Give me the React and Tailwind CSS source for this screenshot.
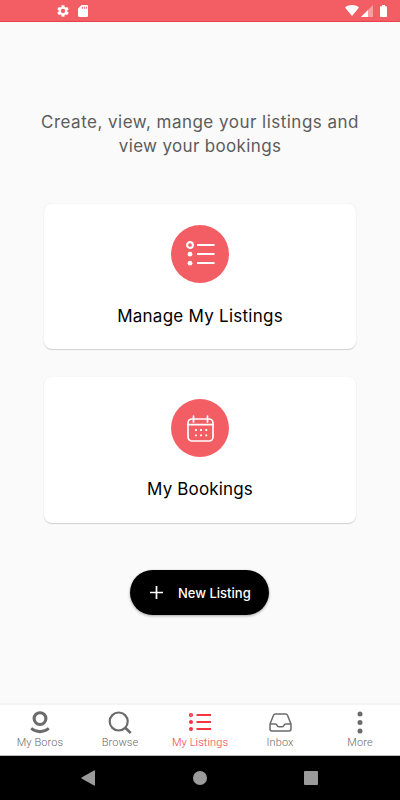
import React from "react";

function StatusBar() {
  return (
    <header className="flex h-[22px] shrink-0 items-center border-b border-[#e8414b] bg-[#f35d64] pr-[13px] pl-[57px] text-white">
      <svg className="size-3" viewBox="2 2 20 20" fill="currentColor">
        <path d="M19.14 12.94c.04-.3.06-.61.06-.94 0-.32-.02-.64-.07-.94l2.03-1.58c.18-.14.23-.41.12-.61l-1.92-3.32c-.12-.22-.37-.29-.59-.22l-2.39.96c-.5-.38-1.03-.7-1.62-.94l-.36-2.54c-.04-.24-.24-.41-.48-.41h-3.84c-.24 0-.43.17-.47.41l-.36 2.54c-.59.24-1.13.57-1.62.94l-2.39-.96c-.22-.08-.47 0-.59.22L2.74 8.87c-.12.21-.08.47.12.61l2.03 1.58c-.05.3-.09.63-.09.94s.02.64.07.94l-2.03 1.58c-.18.14-.23.41-.12.61l1.92 3.32c.12.22.37.29.59.22l2.39-.96c.5.38 1.03.7 1.62.94l.36 2.54c.05.24.24.41.48.41h3.84c.24 0 .44-.17.47-.41l.36-2.54c.59-.24 1.13-.56 1.62-.94l2.39.96c.22.08.47 0 .59-.22l1.92-3.32c.12-.22.07-.47-.12-.61l-2.01-1.58zM12 15.6A3.6 3.6 0 1 1 12 8.4a3.6 3.6 0 0 1 0 7.2z" />
      </svg>
      <svg className="mr-auto ml-[9px] h-3 w-[10px]" viewBox="0 0 10 12">
        <path d="M3.5 0H9q1 0 1 1v10q0 1-1 1H1q-1 0-1-1V3.5z" fill="#fff" />
        <path d="M4.300 1.800v2M6.300 1.800v2M8.300 1.800v2" stroke="#f35d64" strokeWidth="1" />
      </svg>
      <svg className="h-[11px] w-[14px]" viewBox="0 0 14 11">
        <path d="M0 2.400C4-.7 10-.7 14 2.400L7 11z" fill="#fff" />
      </svg>
      <svg className="ml-[2px] h-[12px] w-[12px]" viewBox="0 0 12 12">
        <path d="M12 0v12H0z" fill="#fff" opacity=".4" />
        <path d="M7 5v7H0z" fill="#fff" />
      </svg>
      <svg className="ml-[7px] h-3 w-[7px]" viewBox="0 0 7 12">
        <path d="M2 0h3v1.200h1.200q.8 0 .8.800v9.200q0 .8-.8.800H.8q-.8 0-.8-.8V2q0-.8.8-.8H2z" fill="#fff" />
      </svg>
    </header>
  );
}

function ListGlyph() {
  return (
    <svg className="h-[26px] w-[30px]" viewBox="0 0 30 26" fill="none" stroke="#fff">
      <circle cx="5" cy="4" r="2.900" strokeWidth="2.100" />
      <circle cx="5" cy="13.200" r="2.400" fill="#fff" stroke="none" />
      <circle cx="5" cy="22.200" r="2.400" fill="#fff" stroke="none" />
      <path d="M12 4h17.500M12 13h17.500M12 22h17.500" strokeWidth="1.900" />
    </svg>
  );
}

function CalendarGlyph() {
  return (
    <svg className="h-[27px] w-[27px]" viewBox="0 0 27 27" fill="none" stroke="#fff" strokeWidth="1.700">
      <rect x="1" y="4" width="25" height="22" rx="4" />
      <path d="M1 9.700h25M6.500 1v6M20.500 1v6" strokeLinecap="round" />
      <path d="M8 15h1.800M13.100 15h1.800M18.400 15h1.800M8 20.300h1.800M13.100 20.300h1.800M18.400 20.300h1.800" strokeWidth="1.800" />
    </svg>
  );
}

function ActionCard({ title, className, titleClass, children }) {
  return (
    <button className={`flex w-[312px] flex-col items-center rounded-[8px] bg-white shadow-[0_1px_1px_rgba(0,0,0,0.16),0_0_2px_rgba(0,0,0,0.05)] ${className}`}>
      <span className="flex size-[58px] items-center justify-center rounded-full bg-[#f35d64]">
        {children}
      </span>
      <span className={`text-[17px] leading-6 whitespace-nowrap text-black ${titleClass}`}>{title}</span>
    </button>
  );
}

function Tab({ label, active, children }) {
  return (
    <button className={`flex w-20 flex-col items-center pt-[3px] font-[Roboto,sans-serif] ${active ? "text-[#f4353f]" : "text-[#6b6b6b]"}`}>
      <span className="flex h-7 items-center justify-center">{children}</span>
      <span className="text-[11px] leading-[14px] font-light tracking-[0.100px] whitespace-nowrap">{label}</span>
    </button>
  );
}

export default function App() {
  return (
    <div className="flex h-[800px] w-[400px] flex-col overflow-hidden bg-[#fafafa] font-[Inter,sans-serif]">
      <StatusBar />
      <main className="flex flex-1 flex-col items-center pt-[89px]">
        <p className="text-center text-[17px] leading-[23.500px] whitespace-nowrap text-[#5c5c5c]">
          <span className="block tracking-[0.480px]">Create, view, mange your listings and</span>
          <span className="block tracking-[0.340px]">view your bookings</span>
        </p>
        <div className="mt-[46px] flex flex-col gap-7">
          <ActionCard title="Manage My Listings" className="h-[145px] pt-[21px]" titleClass="mt-[21px] tracking-[0.250px]">
            <ListGlyph />
          </ActionCard>
          <ActionCard title="My Bookings" className="h-[146px] pt-[22px]" titleClass="mt-5 tracking-[0.150px]">
            <CalendarGlyph />
          </ActionCard>
        </div>
        <button className="mt-[47px] mr-px flex h-[45px] w-[139px] items-center rounded-full bg-black pl-[20px] text-white shadow-[0_1px_3px_rgba(0,0,0,0.35)]">
          <svg className="size-[13px]" viewBox="0 0 13 13" stroke="currentColor" strokeWidth="1.700">
            <path d="M6.500 0v13M0 6.500h13" />
          </svg>
          <span className="ml-[15px] text-[13px] leading-5 font-medium whitespace-nowrap">New Listing</span>
        </button>
      </main>
      <nav className="flex h-[53px] shrink-0 border-t-2 border-b border-t-[#f3f3f3] border-b-[#bdbdbd] bg-white">
        <Tab label="My Boros">
          <svg className="h-[23px] w-5" viewBox="0 0 20 23" fill="none" stroke="currentColor">
            <circle cx="10" cy="7.600" r="5.900" strokeWidth="3.100" />
            <path d="M1.200 17.300c4.800 4.500 12.800 4.500 17.600 0" strokeWidth="2.900" />
          </svg>
        </Tab>
        <Tab label="Browse">
          <svg className="h-[23px] w-6" viewBox="0 0 24 23" fill="none" stroke="currentColor" strokeWidth="2.200">
            <circle cx="10.700" cy="10.500" r="9" />
            <path d="m17 16.500 5.700 5.500" strokeWidth="2.600" />
          </svg>
        </Tab>
        <Tab label="My Listings" active>
          <svg className="h-[20px] w-[22px]" viewBox="0 0 22 20" fill="none" stroke="currentColor">
            <circle cx="2" cy="3" r="1.300" strokeWidth="1.600" />
            <circle cx="2" cy="10" r="2" fill="currentColor" stroke="none" />
            <circle cx="2" cy="17" r="2" fill="currentColor" stroke="none" />
            <path d="M7.500 3H22M7.500 10H22M7.500 17H22" strokeWidth="2" />
          </svg>
        </Tab>
        <Tab label="Inbox">
          <svg className="h-[19px] w-[23px]" viewBox="0 0 23 19" fill="none" stroke="currentColor" strokeWidth="1.500" strokeLinejoin="round">
            <path d="M1 11 4.500 2.200Q5 1 6.300 1h10.400q1.300 0 1.800 1.200L22 11v5q0 2-2 2H3q-2 0-2-2z" />
            <path d="M1 11h5.500q1 0 1.300 1 .5 1.800 2.200 1.800h3q1.700 0 2.200-1.800.3-1 1.300-1H22" />
          </svg>
        </Tab>
        <Tab label="More">
          <svg className="h-[23px] w-[6px]" viewBox="0 0 6 23" fill="currentColor">
            <circle cx="3" cy="3" r="2.500" />
            <circle cx="3" cy="11.500" r="2.500" />
            <circle cx="3" cy="20" r="2.500" />
          </svg>
        </Tab>
      </nav>
      <div className="flex h-11 shrink-0 items-center bg-black pr-[82px] pl-[81px]">
        <svg className="h-4 w-[14px]" viewBox="0 0 14 16" fill="#9b9b9b">
          <path d="M13 .4q1-.4 1 .8v13.600q0 1.200-1 .8L.6 8.600q-.8-.6 0-1.200z" />
        </svg>
        <span className="mx-auto size-[14px] rounded-full bg-[#9b9b9b]" />
        <span className="size-[14px] rounded-[1px] bg-[#9b9b9b]" />
      </div>
    </div>
  );
}
